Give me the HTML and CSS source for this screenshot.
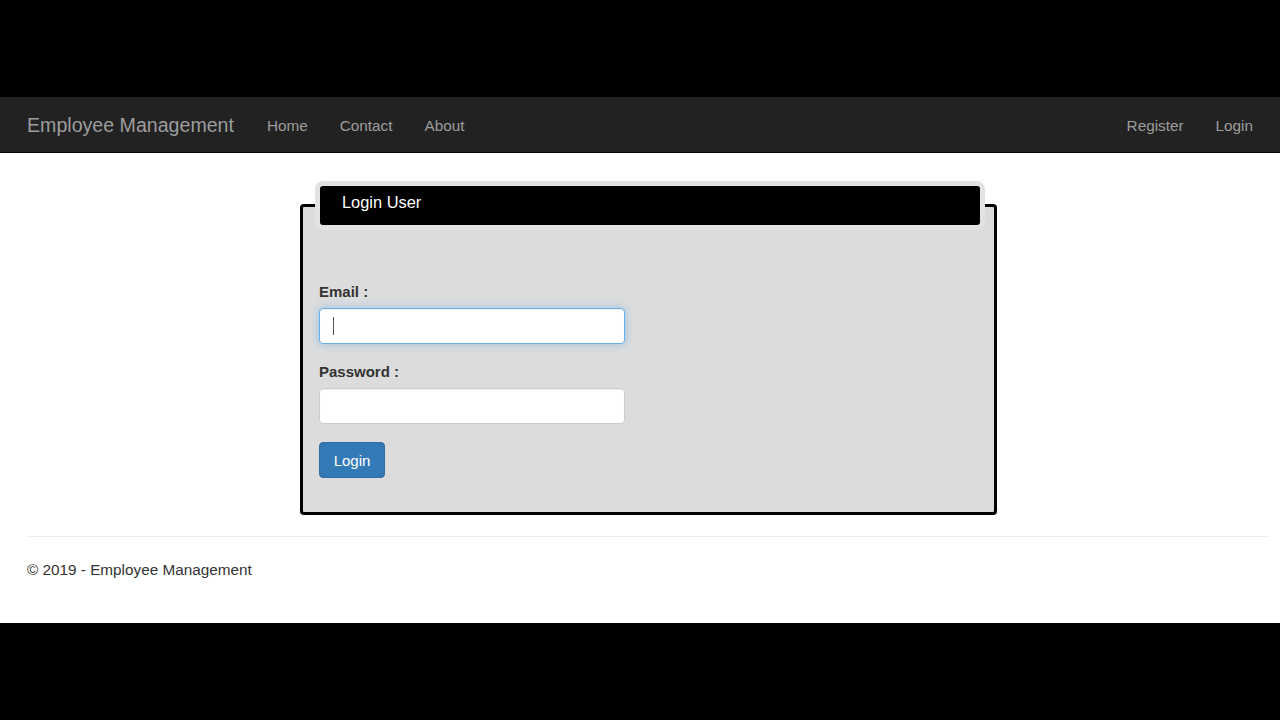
FILE: index.html
```html
<!DOCTYPE html>
<html lang="en">
<head>
    <meta charset="UTF-8">
    <title>Login - Employee Management</title>
    <link rel="stylesheet" href="styles.css">
</head>
<body>
    <div class="band"></div>
    <div class="page">
        <div class="navbar">
            <a class="brand" href="#">Employee Management</a>
            <ul class="nav">
                <li><a href="#">Home</a></li>
                <li><a href="#">Contact</a></li>
                <li><a href="#">About</a></li>
            </ul>
            <ul class="nav nav-right">
                <li><a href="#">Register</a></li>
                <li><a href="#">Login</a></li>
            </ul>
        </div>

        <div class="body-content">
            <fieldset class="login-box">
                <legend>Login User</legend>
                <div class="login-form">
                    <div class="form-group">
                        <label for="email">Email :</label>
                        <div class="input-wrap">
                            <input type="text" id="email" class="form-control focused">
                            <span class="caret"></span>
                        </div>
                    </div>
                    <div class="form-group form-group-last">
                        <label for="password">Password :</label>
                        <input type="password" id="password" class="form-control">
                    </div>
                    <button class="btn" type="button">Login</button>
                </div>
            </fieldset>

            <hr>
            <footer>
                <p>&copy; 2019 - Employee Management</p>
            </footer>
        </div>
    </div>
    <div class="band band-bottom"></div>
</body>
</html>
```

FILE: styles.css
```css
html,body {margin:0;padding:0;height:100%;}
body {background:#000;font:15px/21px "Liberation Sans",Arial,Helvetica,sans-serif;color:#333;display:flex;flex-direction:column;}
ul {list-style-type:none;margin:0;padding:0;}
a {text-decoration:none;}

.band {height:97px;flex-shrink:0;}
.band-bottom {flex:1;}
.page {height:526px;background:#fff;flex-shrink:0;}

/* navbar */
.navbar {box-sizing:border-box;height:56px;padding:2px 0 0 27px;background:#222;border-bottom:1px solid #080808;display:flex;align-items:center;}
.navbar .brand {font-size:19.6px;color:#9d9d9d;margin-right:17px;}
.nav {display:flex;}
.nav li a {display:block;padding:0 16px;color:#9d9d9d;font-size:15.3px;line-height:21px;}
.nav-right {margin-left:auto;margin-right:11px;}

/* login box */
.body-content {padding-top:28px;}
.login-box {width:659px;min-width:0;margin:0 0 0 300px;padding:0 16px 34px;border:3px solid #000;border-radius:4px;background:#dcdcdc;}
.login-box legend {box-sizing:border-box;width:670px;margin:0 -11px 0 -4px;padding:6px 22px 12px;border:5px solid #e3e3e3;border-radius:8px;background:#000;color:#fff;font-size:16.4px;line-height:21px;}
.login-form {padding-top:51px;}

.form-group {margin-bottom:17px;}
.form-group-last {margin-bottom:18px;}
.form-group label {display:block;font-weight:bold;margin-bottom:6px;color:#333;}
.input-wrap {position:relative;width:306px;}
.form-control {display:block;box-sizing:border-box;width:306px;height:36px;padding:6px 13px;border:1px solid #ccc;border-radius:4px;background:#fff;font:15px "Liberation Sans",Arial,sans-serif;box-shadow:inset 0 1px 1px rgba(0,0,0,.075);outline:none;}
.form-control.focused {border-color:#66afe9;box-shadow:inset 0 1px 1px rgba(0,0,0,.075),0 0 8px rgba(102,175,233,.6);}
.caret {position:absolute;left:14px;top:9px;width:1px;height:18px;background:#555;}

.btn {display:block;width:66px;height:36px;padding:0;border:1px solid #2e6da4;border-radius:4px;background:#337ab7;color:#fff;font:15px "Liberation Sans",Arial,sans-serif;cursor:pointer;}

/* footer */
hr {margin:21px 11px 0 27px;border:0;border-top:1px solid #eee;}
footer p {margin:22px 0 0 27px;font-size:15.3px;}
```
